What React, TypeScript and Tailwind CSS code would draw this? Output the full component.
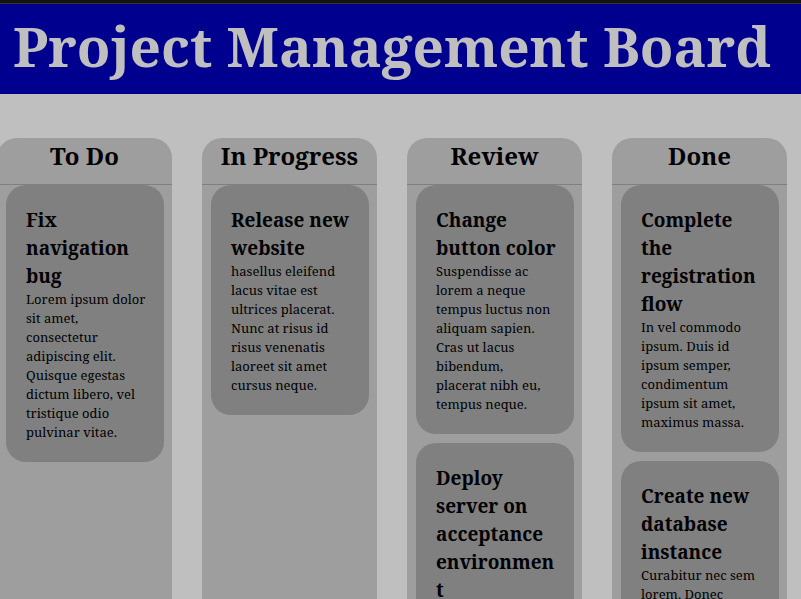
type Card = { title: string; text: string };
type Column = { name: string; cards: Card[] };

const columns: Column[] = [
  {
    name: "To Do",
    cards: [
      {
        title: "Fix navigation bug",
        text: "Lorem ipsum dolor sit amet, consectetur adipiscing elit. Quisque egestas dictum libero, vel tristique odio pulvinar vitae.",
      },
    ],
  },
  {
    name: "In Progress",
    cards: [
      {
        title: "Release new website",
        text: "hasellus eleifend lacus vitae est ultrices placerat. Nunc at risus id risus venenatis laoreet sit amet cursus neque.",
      },
    ],
  },
  {
    name: "Review",
    cards: [
      {
        title: "Change button color",
        text: "Suspendisse ac lorem a neque tempus luctus non aliquam sapien. Cras ut lacus bibendum, placerat nibh eu, tempus neque.",
      },
      { title: "Deploy server on acceptance environment", text: "" },
    ],
  },
  {
    name: "Done",
    cards: [
      {
        title: "Complete the registration flow",
        text: "In vel commodo ipsum. Duis id ipsum semper, condimentum ipsum sit amet, maximus massa.",
      },
      { title: "Create new database instance", text: "Curabitur nec sem lorem. Donec" },
    ],
  },
];

function TaskCard({ title, text }: Card) {
  return (
    <article className="rounded-[20px] bg-[#808080] pt-[21px] pr-[18px] pb-5 pl-5 wrap-anywhere">
      <h3 className="text-[19px] leading-7 font-bold">{title}</h3>
      {text && <p className="text-[13px] leading-[19px]">{text}</p>}
    </article>
  );
}

function BoardColumn({ name, cards }: Column) {
  return (
    <section className="min-w-0 rounded-t-[20px] bg-[#9e9e9e]">
      <h2 className="border-b border-[#808080] pb-2.5 text-center text-2xl leading-9 font-bold">{name}</h2>
      <div className="flex flex-col gap-[9px] pr-2 pb-2 pl-[9px]">
        {cards.map((card) => (
          <TaskCard key={card.title} {...card} />
        ))}
      </div>
    </section>
  );
}

export default function App() {
  return (
    <div className="flex h-screen flex-col overflow-hidden bg-[#bfbfbf] font-['Noto_Serif','Droid_Serif','DejaVu_Serif',serif] text-black">
      <div className="shrink-0 border-t-3 border-[#131313] bg-[#333333] pt-px">
        <header className="bg-[#00008f] px-[13px] pb-1.5">
          <h1 className="text-[55px] leading-[84px] font-bold whitespace-nowrap text-[#bfbfbf]">
            Project Management Board
          </h1>
        </header>
      </div>
      <main className="mt-11 mr-3.5 -ml-[3px] grid min-h-0 grow grid-cols-4 gap-[30px]">
        {columns.map((column) => (
          <BoardColumn key={column.name} {...column} />
        ))}
      </main>
    </div>
  );
}
